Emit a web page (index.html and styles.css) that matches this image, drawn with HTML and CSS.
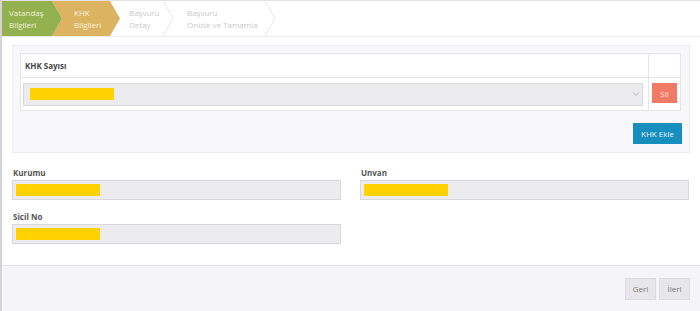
FILE: index.html
```html
<!DOCTYPE html>
<html lang="tr">
<head>
    <meta charset="UTF-8">
    <meta name="viewport" content="width=device-width, initial-scale=1.0">
    <title>KHK Bilgileri</title>
    <link rel="stylesheet" href="styles.css">
</head>
<body>

    <div class="wizard">

        <div class="steps">
            <div class="step step-done">Vatandaş<br>Bilgileri</div>
            <div class="step step-current">KHK<br>Bilgileri</div>
            <div class="step step-todo step-detay">
                <span>Başvuru<br>Detay</span>
            </div>
            <svg class="chevron" width="12" height="35" viewBox="0 0 12 35"><polyline points="1,0 11,17.5 1,35" fill="none" stroke="#e6e6e6" stroke-width="1"/></svg>
            <div class="step step-todo step-onizle">
                <span>Başvuru<br>Önizle ve Tamamla</span>
            </div>
            <svg class="chevron" width="12" height="35" viewBox="0 0 12 35"><polyline points="1,0 11,17.5 1,35" fill="none" stroke="#e6e6e6" stroke-width="1"/></svg>
        </div>

        <div class="content">
            <div class="panel">
                <table class="khk-table">
                    <tr>
                        <th>KHK Sayısı</th>
                        <th class="col-action"></th>
                    </tr>
                    <tr>
                        <td>
                            <div class="select">
                                <span class="masked"></span>
                                <svg class="caret" width="8" height="6" viewBox="0 0 8 6"><polyline points="1,1.5 4,4.5 7,1.5" fill="none" stroke="#b5b5b5" stroke-width="1"/></svg>
                            </div>
                        </td>
                        <td class="col-action"><button class="btn btn-danger">Sil</button></td>
                    </tr>
                </table>
                <div class="panel-actions">
                    <button class="btn btn-info">KHK Ekle</button>
                </div>
            </div>

            <div class="fields">
                <div class="field">
                    <label>Kurumu</label>
                    <div class="input"><span class="masked"></span></div>
                </div>
                <div class="field">
                    <label>Unvan</label>
                    <div class="input"><span class="masked"></span></div>
                </div>
                <div class="field">
                    <label>Sicil No</label>
                    <div class="input"><span class="masked"></span></div>
                </div>
            </div>
        </div>

        <div class="footer">
            <button class="btn btn-default">Geri</button>
            <button class="btn btn-default">İleri</button>
        </div>

    </div>

</body>
</html>
```

FILE: styles.css
```css
body {
    margin: 0;
    padding: 0;
    font-family: "Open Sans", Arial, sans-serif;
    font-size: 8px;
    color: #555;
    background-color: #fff;
}

.wizard {
    width: 698px;
    height: 310px;
    border-left: 2px solid #d4d4d8;
    border-top: 1px solid #e2e2e6;
    display: flex;
    flex-direction: column;
}

/* Step bar */
.steps {
    display: flex;
    height: 35px;
    border-bottom: 1px solid #ededf0;
}

.step {
    height: 35px;
    box-sizing: border-box;
    line-height: 12px;
    display: flex;
    align-items: center;
    white-space: nowrap;
    flex-shrink: 0;
}

.step-done {
    width: 60px;
    padding-left: 7px;
    background-color: #94b14f;
    color: #eef3dc;
    clip-path: polygon(0 0, 50px 0, 60px 50%, 50px 100%, 0 100%);
    position: relative;
    z-index: 2;
}

.step-current {
    width: 68px;
    margin-left: -10px;
    padding-left: 22px;
    background-color: #dcb461;
    color: #fbf1dc;
    clip-path: polygon(0 0, 58px 0, 68px 50%, 58px 100%, 0 100%, 10px 50%);
    position: relative;
    z-index: 1;
}

.step-todo {
    color: #c9c9cc;
}

.step-detay {
    width: 42px;
    padding-left: 9px;
}

.step-onizle {
    width: 90px;
    padding-left: 13px;
}

.chevron {
    flex-shrink: 0;
}

/* Main content */
.content {
    flex: 1;
    padding: 8px 10px 0 10px;
}

.panel {
    border: 1px solid #ebebef;
    background-color: #f8f8fb;
    padding: 7px 5px 8px 7px;
}

.khk-table {
    width: 661px;
    border-collapse: collapse;
    background-color: #fff;
}

.khk-table th,
.khk-table td {
    border: 1px solid #e6e6ea;
    text-align: left;
}

.khk-table th {
    height: 23px;
    padding: 0 4px;
    font-weight: bold;
    color: #444;
}

.khk-table td {
    height: 32px;
    padding: 0 5px 0 2px;
}

.khk-table .col-action {
    width: 25px;
    padding: 0 3px;
}

.select {
    height: 23px;
    box-sizing: border-box;
    border: 1px solid #d8d8dc;
    background-color: #ececee;
    display: flex;
    align-items: center;
    justify-content: space-between;
    padding: 0 2px 0 6px;
}

.masked {
    display: inline-block;
    width: 84px;
    height: 12px;
    background-color: #ffd200;
}

.btn {
    font-family: "Open Sans", Arial, sans-serif;
    font-size: 8px;
    border: 1px solid transparent;
    cursor: pointer;
    padding: 0;
}

.btn-danger {
    width: 25px;
    height: 20px;
    background-color: #f07a66;
    color: #fde3dd;
    margin-top: -2px;
}

.panel-actions {
    display: flex;
    justify-content: flex-end;
    margin-top: 12px;
    padding-right: 2px;
}

.btn-info {
    width: 49px;
    height: 21px;
    background-color: #178fbe;
    color: #e6f4fa;
}

/* Fields */
.fields {
    display: grid;
    grid-template-columns: 329px 329px;
    column-gap: 19px;
    row-gap: 10px;
    margin-top: 13px;
}

.field label {
    display: block;
    font-weight: bold;
    color: #555;
    height: 14px;
    line-height: 14px;
    padding-left: 1px;
}

.input {
    height: 20px;
    box-sizing: border-box;
    border: 1px solid #d8d8dc;
    background-color: #ececee;
    display: flex;
    align-items: center;
    padding: 0 3px;
}

/* Footer */
.footer {
    height: 45px;
    border-top: 1px solid #e4e4e8;
    background-color: #f5f5f9;
    display: flex;
    justify-content: flex-end;
    align-items: center;
    gap: 3px;
    padding-right: 10px;
}

.btn-default {
    width: 31px;
    height: 22px;
    background-color: #e7e7eb;
    border-color: #dcdce0;
    color: #777;
}
```
